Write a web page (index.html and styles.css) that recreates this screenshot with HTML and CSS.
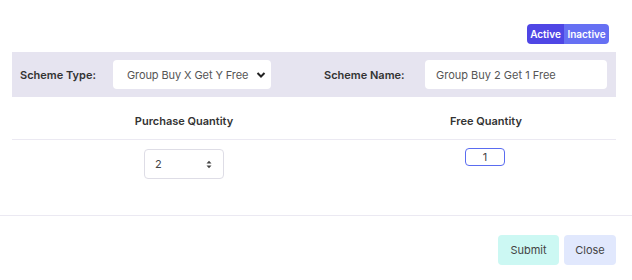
FILE: index.html
```html
<!DOCTYPE html>
<html>
<head>
<meta charset="utf-8">
<link rel="stylesheet" href="styles.css">
</head>
<body>
<div class="modal">
  <div class="modal-body">
    <div class="toggle-row">
      <div class="toggle">
        <span class="tg tg-active">Active</span><span class="tg tg-inactive">Inactive</span>
      </div>
    </div>
    <div class="band">
      <label class="lbl lbl-type">Scheme Type:</label>
      <div class="select">
        <span>Group Buy X Get Y Free</span>
        <svg class="chev" width="10" height="8" viewBox="0 0 10 8"><path d="M1.5 2 L5 5.5 L8.5 2" fill="none" stroke="#222" stroke-width="2"/></svg>
      </div>
      <label class="lbl lbl-name">Scheme Name:</label>
      <div class="text-input">Group Buy 2 Get 1 Free</div>
    </div>
    <div class="table">
      <div class="thead">
        <div class="th c1">Purchase Quantity</div>
        <div class="th c2">Free Quantity</div>
      </div>
      <div class="tbody">
        <div class="td c1">
          <div class="num-input"><span>2</span>
            <svg class="spin" width="6" height="9" viewBox="0 0 6 9"><path d="M0.5 3.5 L3 0.8 L5.5 3.5 Z M0.5 5.5 L3 8.2 L5.5 5.5 Z" fill="#444"/></svg>
          </div>
        </div>
        <div class="td c2">
          <div class="free-input">1</div>
        </div>
      </div>
    </div>
  </div>
  <div class="modal-footer">
    <button class="btn btn-submit">Submit</button>
    <button class="btn btn-close">Close</button>
  </div>
</div>
</body>
</html>
```

FILE: styles.css
```css
* { box-sizing: border-box; }
html, body { margin: 0; padding: 0; background: #fff; }
body {
  font-family: Inter, "Noto Sans", sans-serif;
  color: #333;
  width: 632px;
  height: 280px;
  overflow: hidden;
}
.modal-body {
  padding: 24px 16px 0 12px;
  height: 215px;
}
.toggle-row {
  display: flex;
  justify-content: flex-end;
  padding-right: 7px;
}
.toggle {
  display: flex;
  height: 20px;
  border-radius: 4px;
  overflow: hidden;
}
.tg {
  display: flex;
  align-items: center;
  justify-content: center;
  color: #fff;
  font-size: 10px;
  font-weight: 600;
}
.tg-active { background: #4f46e5; width: 37px; }
.tg-inactive { background: #6670f3; width: 45px; }

.band {
  margin-top: 8px;
  height: 45px;
  background: #e6e4f0;
  display: flex;
  align-items: center;
  padding-left: 8px;
}
.lbl {
  font-size: 11px;
  font-weight: 600;
  color: #333;
}
.lbl-type { width: 93px; }
.lbl-name { width: 101px; margin-left: 53px; }
.select, .text-input {
  height: 29px;
  background: #fff;
  border-radius: 4px;
  display: flex;
  align-items: center;
  font-size: 11px;
  color: #555;
}
.select {
  width: 158px;
  padding: 0 5px 0 14px;
  justify-content: space-between;
  letter-spacing: -0.1px;
}
.text-input {
  width: 182px;
  padding-left: 11px;
}
.thead {
  display: flex;
  height: 43px;
  padding-top: 6px;
  border-bottom: 1px solid #ebe9f2;
}
.c1 { width: 344px; }
.c2 { width: 260px; }
.th {
  display: flex;
  align-items: center;
  justify-content: center;
  font-size: 11px;
  font-weight: 600;
  color: #333;
}
.tbody { display: flex; padding-top: 9px; }
.td { display: flex; justify-content: center; }
.num-input {
  width: 80px;
  height: 30px;
  border: 1px solid #dedde6;
  border-radius: 4px;
  display: flex;
  align-items: center;
  justify-content: space-between;
  padding: 0 11px 0 10px;
  font-size: 11px;
  color: #444;
}
.free-input {
  width: 40px;
  height: 18px;
  border: 1px solid #5a6cf0;
  border-radius: 4px;
  display: flex;
  align-items: center;
  justify-content: center;
  font-size: 11px;
  color: #444;
  margin-left: -2px;
  margin-top: -1px;
}
.modal-footer {
  border-top: 1px solid #ebe9f2;
  display: flex;
  justify-content: flex-end;
  gap: 5px;
  padding: 19px 16px 0 0;
}
.btn {
  height: 30px;
  border: none;
  border-radius: 4px;
  font-family: inherit;
  font-size: 11px;
  color: #444;
  padding: 0;
}
.btn-submit { width: 61px; background: #ccf8f3; }
.btn-close { width: 52px; background: #e1e8fd; }
```
